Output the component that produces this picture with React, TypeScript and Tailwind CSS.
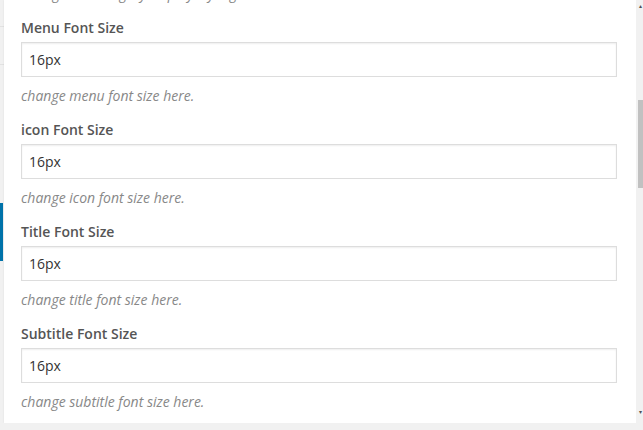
import React from 'react';

const fields = [
  { label: 'Menu Font Size', value: '16px', help: 'change menu font size here.' },
  { label: 'icon Font Size', value: '16px', help: 'change icon font size here.' },
  { label: 'Title Font Size', value: '16px', help: 'change title font size here.' },
  { label: 'Subtitle Font Size', value: '16px', help: 'change subtitle font size here.' },
];

const App: React.FC = () => {
  return (
    <div
      className="w-[643px] h-[430px] overflow-hidden bg-[#f1f1f1] flex flex-col"
      style={{ fontFamily: '"Open Sans", "Noto Sans", sans-serif' }}
    >
      <div className="flex h-[423px]">
        {/* admin menu edge */}
        <div className="w-[4px] flex flex-col bg-[#f1f1f1]">
          <div className="h-[27px] border-b border-[#e2e2e2]"></div>
          <div className="h-[38px] border-b border-[#e2e2e2]"></div>
          <div className="h-[138px]"></div>
          <div className="h-[58px] w-[3px] bg-[#0073aa]"></div>
        </div>

        {/* settings panel */}
        <div className="flex-1 bg-white overflow-hidden pl-[17px] pr-[19px] shadow-[0_0_2px_rgba(0,0,0,0.08)]">
          <p className="mt-[-16px] h-[20px] leading-[20px] text-[14px] italic text-[#888] pl-[1px]">
            change the category display styling here.
          </p>
          {fields.map((f) => (
            <div key={f.label} className="mt-[14px]">
              <label className="block h-[20px] leading-[20px] text-[14px] font-semibold text-[#555]">
                {f.label}
              </label>
              <input
                readOnly
                value={f.value}
                className="mt-[4px] block w-full h-[35px] border border-[#dddddd] px-[7px] text-[14px] text-[#333] shadow-[inset_0_1px_2px_rgba(0,0,0,0.07)] outline-none"
              />
              <p className="mt-[9px] h-[20px] leading-[20px] text-[14px] italic text-[#888]">
                {f.help}
              </p>
            </div>
          ))}
        </div>

        {/* scrollbar */}
        <div className="w-[7px] bg-[#f1f1f1] relative">
          <div className="absolute top-[3px] right-[1px] text-[6px] leading-none text-[#505050]">▴</div>
          <div className="absolute top-[100px] left-[2px] w-[5px] h-[88px] bg-[#c1c1c1]"></div>
          <div className="absolute bottom-[8px] right-[1px] text-[6px] leading-none text-[#505050]">▾</div>
        </div>
      </div>
      <div className="flex-1 bg-[#f1f1f1]"></div>
    </div>
  );
};

export default App;
